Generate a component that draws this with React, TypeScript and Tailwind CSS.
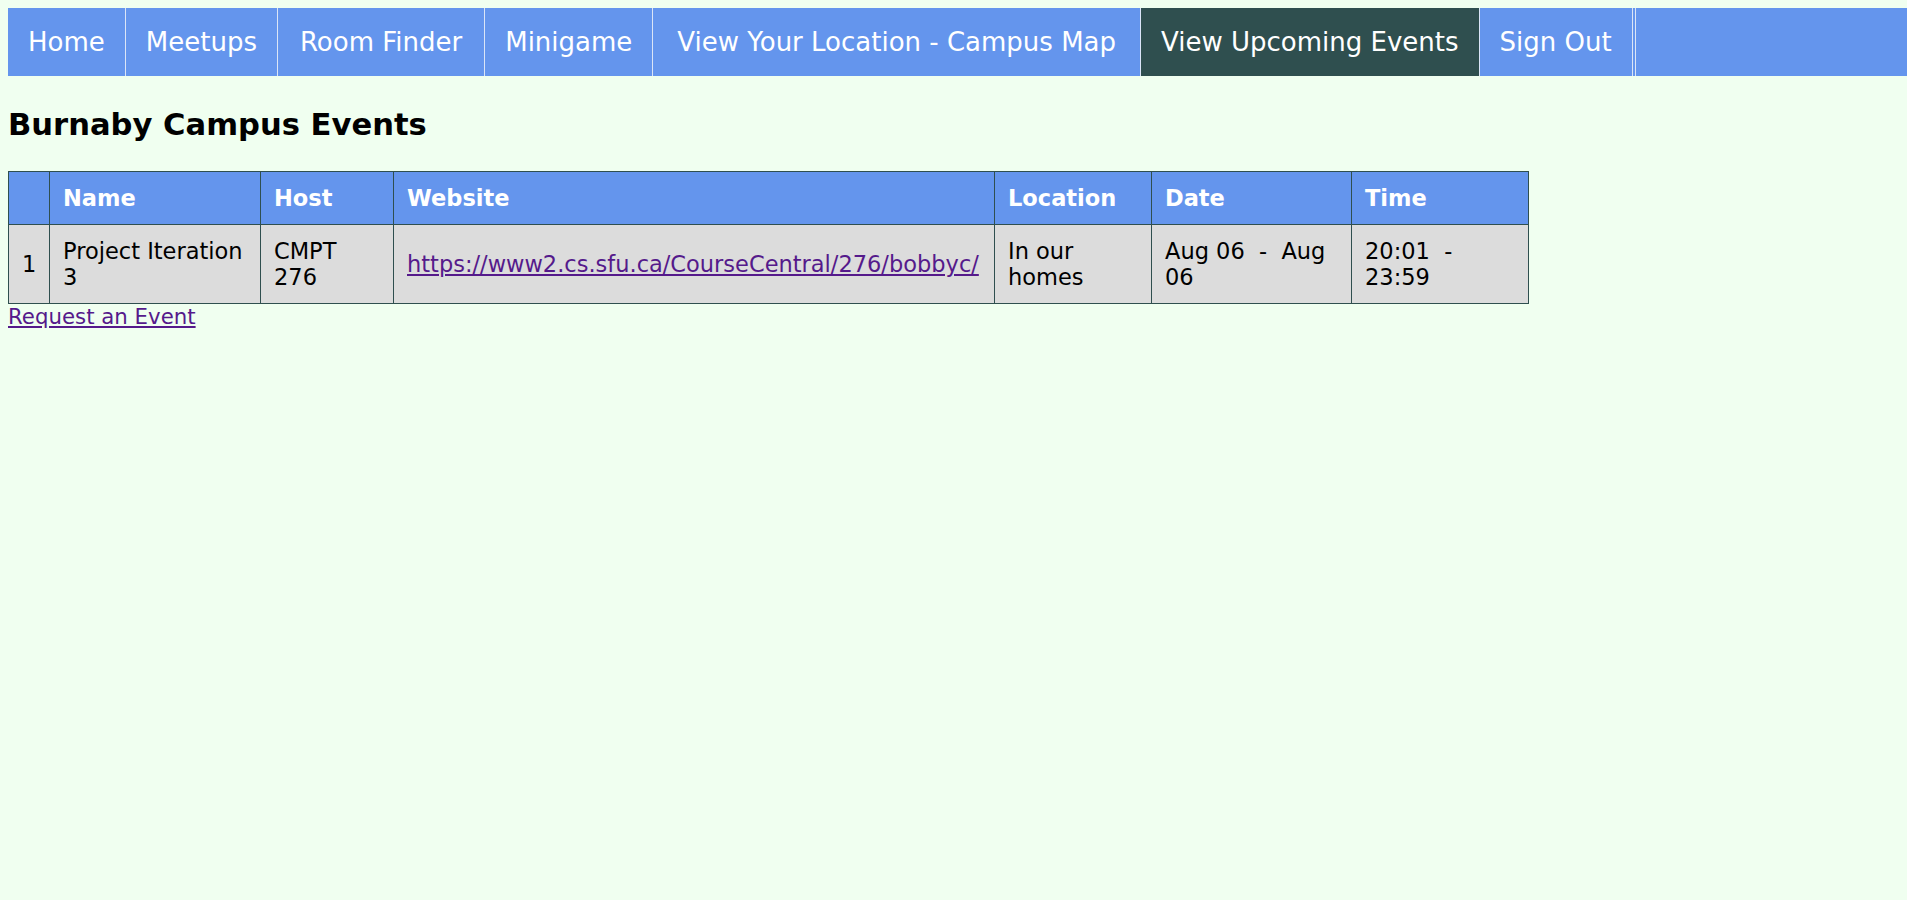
import React from "react";

const navItems = [
  { label: "Home", pad: "px-[20px]" },
  { label: "Meetups", pad: "px-[20px]" },
  { label: "Room Finder", pad: "px-[22px]" },
  { label: "Minigame", pad: "px-[20px]" },
  { label: "View Your Location - Campus Map", pad: "px-[24px]" },
  { label: "View Upcoming Events", pad: "px-[20px]" },
  { label: "Sign Out", pad: "px-[20px]" },
];

export default function App() {
  return (
    <div
      className="min-h-[900px] bg-[#f0fff0] p-[8px] text-black"
      style={{ fontFamily: "'DejaVu Sans', 'Liberation Sans', sans-serif" }}
    >
      <nav className="-mr-[8px] flex h-[68px] bg-[#6495ed]">
        {navItems.map((item) => (
          <a
            key={item.label}
            href="#"
            className={`block whitespace-nowrap border-r border-[#dbe5f7] py-[19px] text-[26px] leading-[30px] text-white ${item.pad} ${
              item.label === "View Upcoming Events" ? "bg-[#2f4f4f]" : ""
            }`}
          >
            {item.label}
          </a>
        ))}
        <div className="ml-[2px] border-l border-[#dbe5f7]" />
      </nav>

      <h2 className="mt-[31px] mb-[29px] text-[30.6px] font-bold leading-[35px]">
        Burnaby Campus Events
      </h2>

      <table className="w-[1520px] table-fixed border-collapse text-[22.5px] leading-[26px]">
        <colgroup>
          <col className="w-[41px]" />
          <col className="w-[211px]" />
          <col className="w-[133px]" />
          <col className="w-[601px]" />
          <col className="w-[157px]" />
          <col className="w-[200px]" />
          <col className="w-[177px]" />
        </colgroup>
        <thead>
          <tr className="bg-[#6495ed] text-left font-bold text-white">
            <th className="border border-[#2f4f4f] px-[13px] py-[13px]"></th>
            <th className="border border-[#2f4f4f] px-[13px] py-[13px]">Name</th>
            <th className="border border-[#2f4f4f] px-[13px] py-[13px]">Host</th>
            <th className="border border-[#2f4f4f] px-[13px] py-[13px]">Website</th>
            <th className="border border-[#2f4f4f] px-[13px] py-[13px]">Location</th>
            <th className="border border-[#2f4f4f] px-[13px] py-[13px]">Date</th>
            <th className="border border-[#2f4f4f] px-[13px] py-[13px]">Time</th>
          </tr>
        </thead>
        <tbody>
          <tr className="bg-[#dcdcdc] align-middle">
            <td className="border border-[#2f4f4f] px-[13px] py-[13px]">1</td>
            <td className="border border-[#2f4f4f] px-[13px] py-[13px]">
              Project Iteration 3
            </td>
            <td className="border border-[#2f4f4f] px-[13px] py-[13px]">CMPT 276</td>
            <td className="border border-[#2f4f4f] px-[13px] py-[13px]">
              <a href="#" className="whitespace-nowrap text-[#551a8b] underline">
                https://www2.cs.sfu.ca/CourseCentral/276/bobbyc/
              </a>
            </td>
            <td className="border border-[#2f4f4f] px-[13px] py-[13px]">
              In our homes
            </td>
            <td className="border border-[#2f4f4f] px-[13px] py-[13px]">
              {"Aug 06\u00a0 -\u00a0 Aug 06"}
            </td>
            <td className="border border-[#2f4f4f] px-[13px] py-[13px]">
              {"20:01\u00a0 -\u00a0 23:59"}
            </td>
          </tr>
        </tbody>
      </table>
      <a
        href="#"
        className="mt-[1px] block w-fit text-[21.3px] leading-[24px] text-[#551a8b] underline"
      >
        Request an Event
      </a>
    </div>
  );
}
